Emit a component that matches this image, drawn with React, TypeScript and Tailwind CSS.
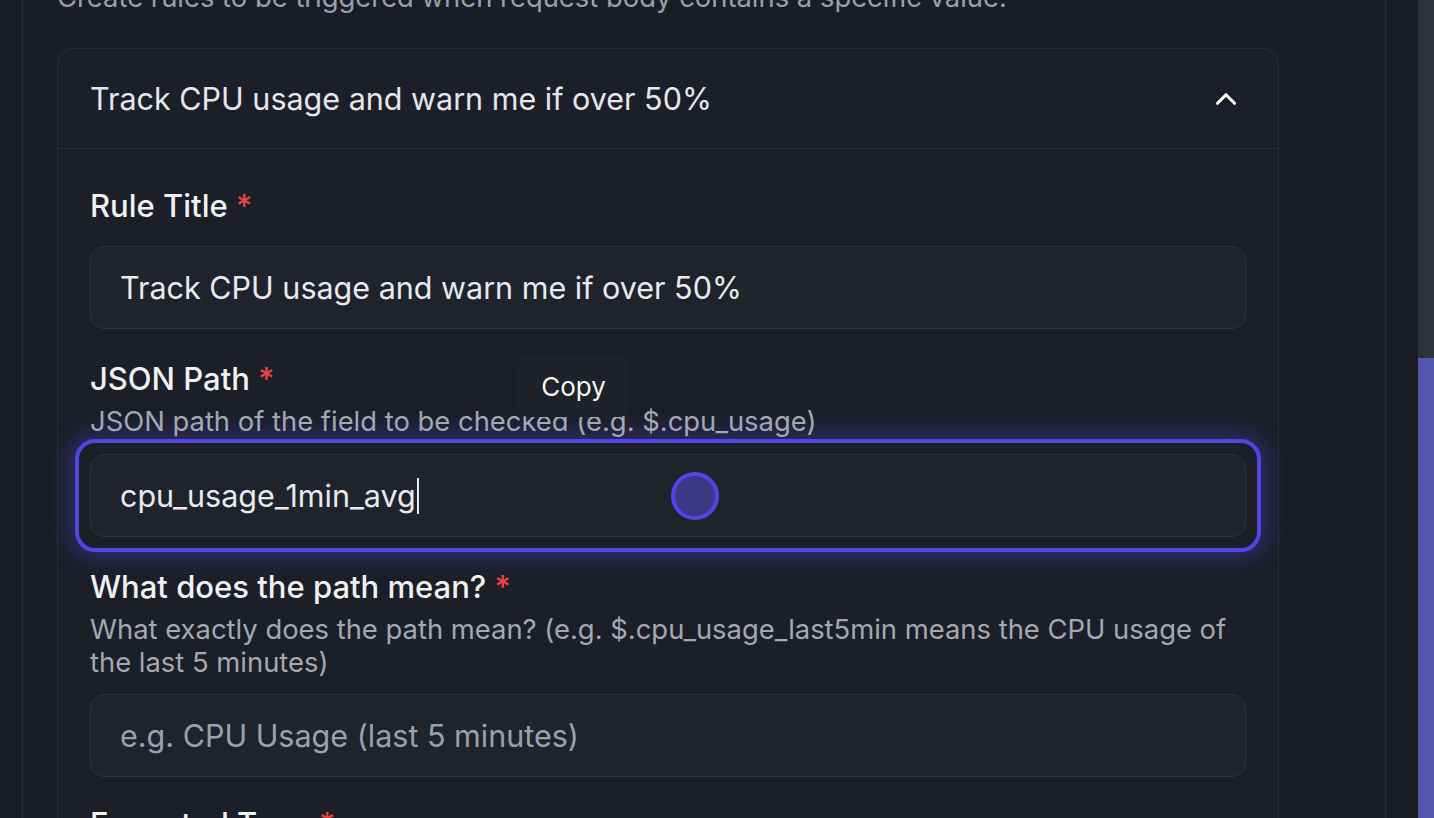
import { ChevronUp } from 'lucide-react';

function Label({ text }: { text: string }) {
  return (
    <div className="text-[31px] leading-[34px] font-medium text-[#f0f1f3]">
      {text} <span className="text-[#ef4444]">*</span>
    </div>
  );
}

function Desc({ children }: { children: React.ReactNode }) {
  return <p className="mt-[9px] text-[27.4px] leading-[33px] text-[#a3a8b3]">{children}</p>;
}

function TextBox({ value, placeholder }: { value?: string; placeholder?: string }) {
  return (
    <div className="h-[83px] rounded-[14px] border border-[#30343d] bg-[#1f232b] px-[29px] flex items-center text-[30.5px]">
      {value ? (
        <span className="text-[#e8eaed]">{value}</span>
      ) : (
        <span className="text-[#9aa1ac]">{placeholder}</span>
      )}
    </div>
  );
}

export default function App() {
  return (
    <div className="h-[818px] w-[1434px] overflow-hidden bg-[#1a1d26] flex font-['Inter',sans-serif]">
      <div className="w-[23px] border-r border-[#2a2e37]" />

      <div className="w-[1363px] border-r border-[#2a2e37] px-[34px]">
        <div className="-mt-[19px]">
          <p className="text-[27.4px] leading-[33px] text-[#9aa0ab] whitespace-nowrap">
            Create rules to be triggered when request body contains a specific value.
          </p>

          <div className="mt-[34px] w-[1222px] rounded-[16px] border border-[#2a2e37] bg-[#1c1f28]">
            <div className="h-[100px] flex items-center justify-between pl-[32px] pr-[35px] border-b border-[#2a2e37]">
              <span className="text-[30.5px] text-[#e5e7eb]">Track CPU usage and warn me if over 50%</span>
              <ChevronUp size={34} strokeWidth={2.2} className="text-white" />
            </div>

            <div className="px-[32px] pt-[40px]">
              <Label text="Rule Title" />
              <div className="mt-[23px]">
                <TextBox value="Track CPU usage and warn me if over 50%" />
              </div>

              <div className="relative mt-[33px]">
                <Label text="JSON Path" />
                <Desc>JSON path of the field to be checked (e.g. $.cpu_usage)</Desc>
                <div className="absolute left-[428px] -top-[7px] w-[111px] h-[62px] rounded-[10px] bg-[#1f222a] flex items-center justify-center text-[26px] text-[#f5f5f7]">
                  Copy
                </div>
                <div className="mt-[1px] -mx-[15px] rounded-[20px] border-4 border-[#4f46e5] p-[11px] shadow-[0_0_22px_6px_rgba(79,70,229,0.35)]">
                  <div className="relative h-[83px] rounded-[14px] border border-[#30343d] bg-[#1f232b] px-[29px] flex items-center text-[30.5px] text-[#e8eaed]">
                    <span>cpu_usage_1min_avg</span>
                    <span className="ml-[1px] w-[2px] h-[36px] bg-[#e8eaed]" />
                    <div className="absolute left-[580px] top-1/2 -translate-y-1/2 w-[48px] h-[48px] rounded-full border-4 border-[#4f46e5] bg-[#3c3986]" />
                  </div>
                </div>
              </div>

              <div className="mt-[18px]">
                <Label text="What does the path mean?" />
                <Desc>
                  What exactly does the path mean? (e.g. $.cpu_usage_last5min means the CPU usage of the last 5 minutes)
                </Desc>
                <div className="mt-[15px]">
                  <TextBox placeholder="e.g. CPU Usage (last 5 minutes)" />
                </div>
              </div>

              <div className="mt-[30px]">
                <Label text="Expected Type" />
              </div>
            </div>
          </div>
        </div>
      </div>

      <div className="flex-1" />
      <div className="w-[16px] flex flex-col">
        <div className="h-[358px] bg-[#2e323a]" />
        <div className="flex-1 bg-[#5156a9]" />
      </div>
    </div>
  );
}
